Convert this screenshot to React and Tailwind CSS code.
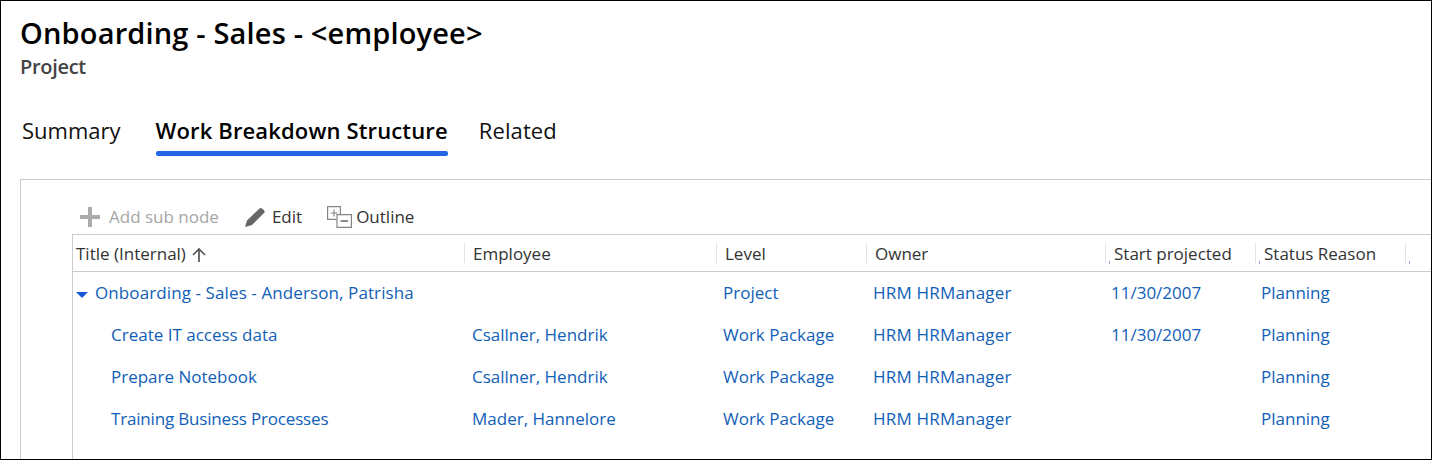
const COLS = ['w-[391px]', 'w-[252px]', 'w-[150px]', 'w-[239px]', 'w-[150px]', 'w-[150px]'];

const ROWS = [
  { title: 'Onboarding - Sales - Anderson, Patrisha', titleClass: 'tracking-[0.1px]', employee: '', level: 'Project', owner: 'HRM HRManager', start: '11/30/2007', status: 'Planning', root: true },
  { title: 'Create IT access data', employee: 'Csallner, Hendrik', level: 'Work Package', owner: 'HRM HRManager', start: '11/30/2007', status: 'Planning' },
  { title: 'Prepare Notebook', employee: 'Csallner, Hendrik', level: 'Work Package', owner: 'HRM HRManager', start: '', status: 'Planning' },
  { title: 'Training Business Processes', titleClass: 'tracking-[-0.18px]', employee: 'Mader, Hannelore', level: 'Work Package', owner: 'HRM HRManager', start: '', status: 'Planning' },
];

function HeaderCell({ label, width, tick }) {
  return (
    <div className={`${width} h-full shrink-0 flex items-center`}>
      <span className="w-[1px] h-[20px] bg-[#e3e3e3] shrink-0" />
      {tick && <span className="w-[1px] h-[3px] bg-[#8fa8d8] shrink-0 self-end mb-[7px] ml-[3px] mr-[4px]" />}
      <span className={`${tick ? '' : 'ml-[8px]'} text-[#333333] mt-[2px]`}>{label}</span>
    </div>
  );
}

export default function App() {
  return (
    <div className="w-[1432px] h-[460px] bg-white border border-black overflow-hidden font-['Open_Sans',sans-serif]">
      <div className="pl-[19px] pt-[12px]">
        <h1 className="text-[29px] leading-[40px] font-semibold text-black tracking-[0.16px]">Onboarding - Sales - &lt;employee&gt;</h1>
        <p className="text-[20px] leading-[28px] font-semibold text-[#444444] tracking-[-0.3px]">Project</p>
      </div>

      <div className="flex gap-[31px] pl-[21px] mt-[34px] text-[22px] leading-[30px] text-[#111111]">
        <span>Summary</span>
        <span className="relative font-semibold text-black ml-[4px] tracking-[0.14px]">
          Work Breakdown Structure
          <span className="absolute left-0 right-0 top-[36px] h-[5px] rounded-[2px] bg-[#2266e3]" />
        </span>
        <span className="tracking-[0.1px]">Related</span>
      </div>

      <div className="ml-[19px] mt-[34px] border-t border-l border-[#cccccc] h-[300px] pl-[51px]">
        <div className="h-[54px] flex items-end pb-[5px] pl-[8px] text-[17px] leading-[24px]">
          <span className="flex items-center gap-[9px] text-[#a6a6a6]">
            <svg width="20" height="20" viewBox="0 0 20 20" fill="#ababab"><path d="M8 0h4v8h8v4h-8v8H8v-8H0V8h8z" /></svg>
            Add sub node
          </span>
          <span className="flex items-center gap-[7px] ml-[25px] text-[#333333]">
            <svg width="21" height="20" viewBox="0 0 21 20" fill="#666666"><path d="M15.500 1.500a2 2 0 0 1 2.500 0l2 1.800a2 2 0 0 1 0 2.700L8 18l-7 2 2-6.500z" /></svg>
            Edit
          </span>
          <span className="flex items-center gap-[4px] ml-[25px] text-[#333333]">
            <svg width="25" height="22" viewBox="0 0 25 22" fill="none" stroke="#858585" strokeWidth="1.200">
              <path d="M9.500 13.400H.6V.6h12.800v8" />
              <path d="M10 8.600h14.400v12.800H10z" />
              <path d="M3.500 7h7M7 3.500v7" />
              <path d="M13.500 15h7.500" stroke="#666666" strokeWidth="1.500" />
            </svg>
            Outline
          </span>
        </div>

        <div className="border-t border-l border-[#cccccc] h-[240px]">
          <div className="h-[37px] border-b border-[#cccccc] flex items-center text-[17px]">
            <div className={`${COLS[0]} shrink-0 pl-[3px] flex items-center text-[#333333] mt-[2px]`}>
              Title (Internal)
              <svg width="16" height="16" viewBox="0 0 16 16" className="ml-[5px] mt-[2px]" fill="none" stroke="#555555" strokeWidth="1.700">
                <path d="M8 15V2M2 8l6-6 6 6" />
              </svg>
            </div>
            <HeaderCell label="Employee" width={COLS[1]} />
            <HeaderCell label="Level" width={COLS[2]} />
            <HeaderCell label="Owner" width={COLS[3]} />
            <HeaderCell label="Start projected" width={COLS[4]} tick />
            <HeaderCell label="Status Reason" width={COLS[5]} tick />
            <HeaderCell label="" width="w-[6px]" tick />
          </div>

          {ROWS.map((row) => (
            <div key={row.title} className="h-[42px] flex items-center text-[17px] text-[#1160b7]">
              <div className={`${COLS[0]} shrink-0 flex items-center ${row.root ? 'pl-[3px]' : 'pl-[38px]'}`}>
                {row.root && <span className="w-0 h-0 mt-[3px] mr-[7px] border-x-[6px] border-x-transparent border-t-[6px] border-t-[#1a56db]" />}
                <span className={row.titleClass}>{row.title}</span>
              </div>
              <div className={`${COLS[1]} shrink-0 pl-[8px]`}>{row.employee}</div>
              <div className={`${COLS[2]} shrink-0 pl-[7px]`}>{row.level}</div>
              <div className={`${COLS[3]} shrink-0 pl-[7px] tracking-[0.2px]`}>{row.owner}</div>
              <div className={`${COLS[4]} shrink-0 pl-[6px]`}>{row.start}</div>
              <div className={`${COLS[5]} shrink-0 pl-[6px]`}>{row.status}</div>
            </div>
          ))}
        </div>
      </div>
    </div>
  );
}
